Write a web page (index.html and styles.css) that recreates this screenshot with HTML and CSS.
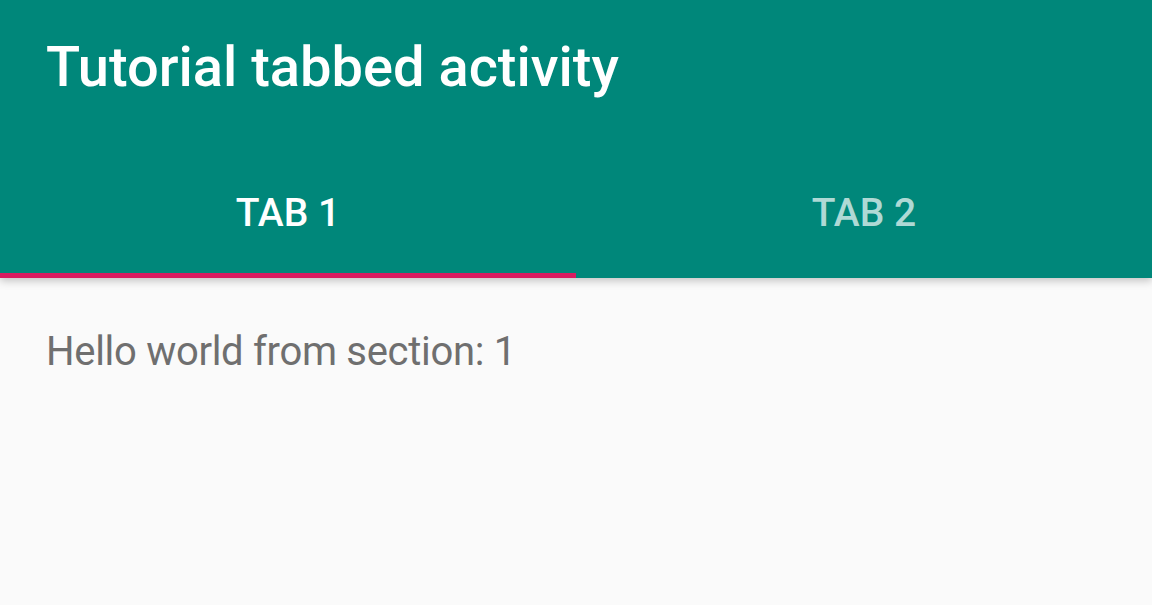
FILE: index.html
```html
<!doctype html>
<html>
  <head>
    <meta charset="utf-8">
    <title>Tutorial tabbed activity</title>
    <link rel="stylesheet" href="styles.css">
  </head>
  <body>
    <div class="appbar">
      <div class="toolbar">
        <h1 class="title">Tutorial tabbed activity</h1>
      </div>
      <div class="tabs">
        <div class="tab active">TAB 1</div>
        <div class="tab">TAB 2</div>
      </div>
    </div>
    <div class="section">
      <p class="label">Hello world from section: 1</p>
    </div>
  </body>
</html>
```

FILE: styles.css
```css
body {
    margin: 0;
    font-family: Roboto, "Noto Sans", sans-serif;
    background: #fafafa;
    height: 605px;
    overflow: hidden;
}
.appbar {
    background: #00877a;
    box-shadow: 0 3px 8px rgba(0, 0, 0, 0.22);
    position: relative;
}
.toolbar {
    height: 144px;
    display: flex;
    align-items: center;
    padding: 0 46px;
}
.title {
    margin: 0;
    color: #fff;
    font-size: 56px;
    font-weight: 500;
    margin-top: -10px;
}
.tabs {
    display: flex;
    height: 134px;
}
.tab {
    flex: 1;
    display: flex;
    align-items: center;
    justify-content: center;
    color: rgba(255, 255, 255, 0.7);
    font-size: 39px;
    font-weight: 500;
    padding-top: 8px;
    border-bottom: 5px solid transparent;
    box-sizing: border-box;
}
.tab.active {
    color: #fff;
    border-bottom-color: #d81b60;
}
.section {
    padding: 50px 46px;
}
.label {
    margin: 0;
    color: #6f6f6f;
    font-size: 40px;
    letter-spacing: -0.3px;
}
```
